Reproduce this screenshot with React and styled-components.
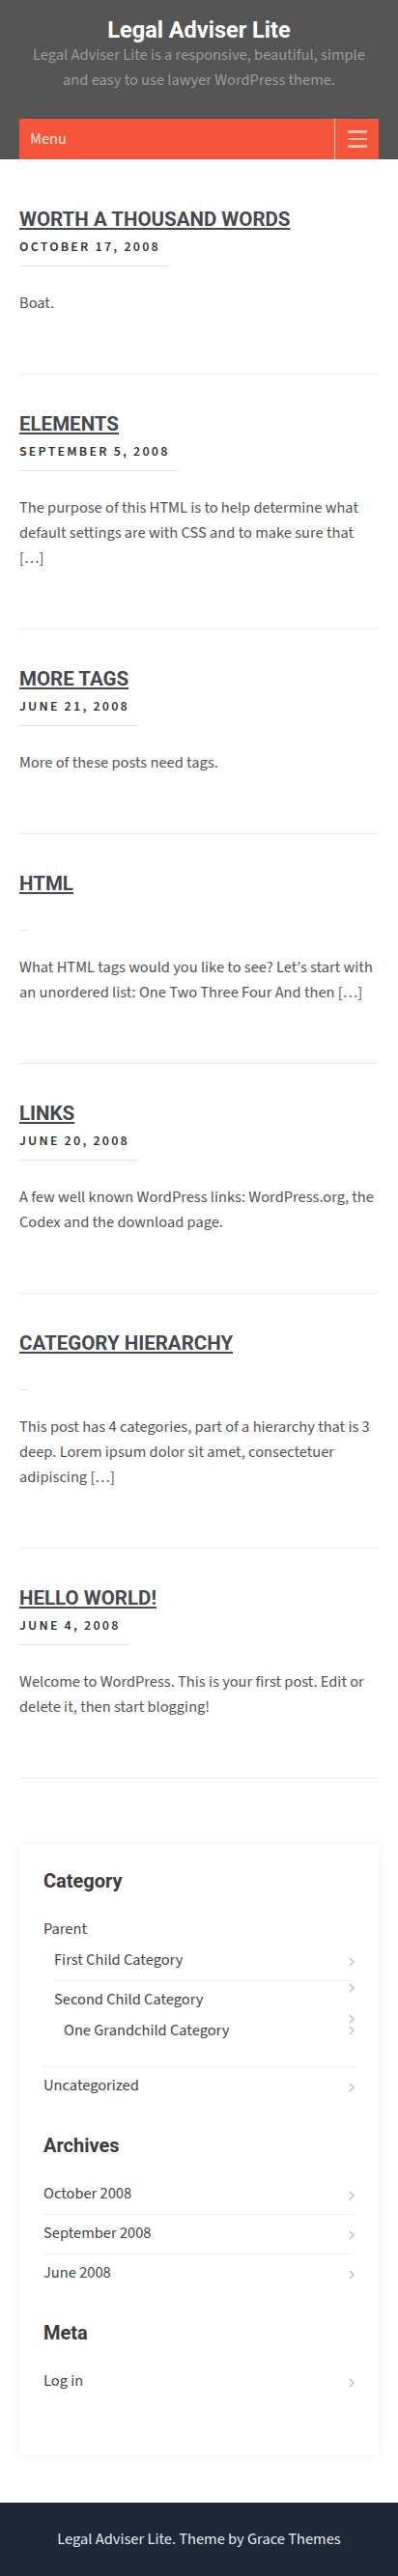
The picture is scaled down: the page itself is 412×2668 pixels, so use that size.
import React from "react";
import styled, { createGlobalStyle } from "styled-components";

const Global = createGlobalStyle`
  * { box-sizing: border-box; }
  html, body { margin: 0; padding: 0; background: #fff; }
  body { font-family: "Source Sans 3", "Lato", sans-serif; color: #555; }
  ul { list-style: none; margin: 0; padding: 0; }
`;

const Header = styled.header`
  background: #555555;
  padding: 18px 20px 0;
  text-align: center;
`;
const SiteTitle = styled.h1`
  margin: 0;
  font-family: "Roboto", sans-serif;
  font-weight: 700;
  font-size: 23.5px;
  line-height: 26px;
  color: #fff;
`;
const Tagline = styled.p`
  margin: 0 0 27px;
  font-size: 16.4px;
  font-weight: 400;
  line-height: 26px;
  color: #9c9c9c;
  padding: 0 6px;
`;
const MenuBar = styled.nav`
  display: flex;
  height: 42px;
  background: #f5553b;
  align-items: stretch;
`;
const MenuLabel = styled.span`
  flex: 1;
  display: flex;
  align-items: center;
  padding-left: 11px;
  font-size: 16.4px;
  color: #fde7dc;
`;
const Burger = styled.button`
  width: 46px;
  border: 0;
  border-left: 1px solid #f7cdb9;
  background: transparent;
  display: flex;
  flex-direction: column;
  align-items: center;
  justify-content: center;
  gap: 5px;
  padding: 0;
  span {
    display: block;
    width: 20px;
    height: 2.5px;
    border-radius: 1px;
    background: #f5c3ad;
  }
`;

const Main = styled.main`
  padding: 11px 20px 0;
`;
const Article = styled.article`
  padding: 36px 0 60px;
  border-bottom: 1px solid #e9e9e9;
`;
const PostTitle = styled.h2`
  margin: 0;
  font-family: "Roboto", sans-serif;
  font-weight: 700;
  font-size: 20.5px;
  line-height: 30px;
  text-transform: uppercase;
  a {
    color: #46494f;
    text-decoration: underline;
    text-decoration-thickness: 2px;
    text-underline-offset: 2px;
  }
`;
const DateWrap = styled.div`
  margin-top: 4px;
`;
const PostDate = styled.span`
  display: inline-block;
  height: 30px;
  padding: 0 9px 9px 0;
  border-bottom: 1px solid #e2e2e2;
  font-size: 14px;
  font-weight: 600;
  line-height: 20px;
  letter-spacing: 2.2px;
  text-transform: uppercase;
  color: #333;
  vertical-align: top;
`;
const Excerpt = styled.p`
  margin: 25px 0 0;
  font-size: 16.4px;
  line-height: 26px;
  color: #555;
`;

const Card = styled.aside`
  margin: 68px 20px 0;
  padding: 25px 25px 56px;
  border-radius: 4px;
  background: #fff;
  box-shadow: 0 0 12px rgba(0, 0, 0, 0.07);
`;
const Widget = styled.section`
  & + & { margin-top: 28px; }
`;
const WidgetTitle = styled.h3`
  margin: 0 0 18px;
  font-family: "Roboto", sans-serif;
  font-weight: 700;
  font-size: 20px;
  line-height: 26px;
  color: #3b3b3b;
`;
const SubList = styled.ul`
  padding-left: ${(p) => p.$indent || 0}px;
`;
const Item = styled.li`
  position: relative;
  padding: 6px 0 8px;
  font-size: 16.4px;
  line-height: 26px;
  color: #444;
  border-bottom: ${(p) => (p.$last ? "0" : "1px solid #ededed")};
`;
const Chevron = styled.svg`
  position: absolute;
  right: 0;
  width: 6px;
  height: 10px;
`;

const Arrow = ({ top }) => (
  <Chevron viewBox="0 0 6 10" style={{ top }}>
    <polyline points="1,1 5,5 1,9" fill="none" stroke="#b5b5b5" strokeWidth="1.1" />
  </Chevron>
);

const Footer = styled.footer`
  margin-top: 49px;
  background: #1d2737;
  padding: 25px 20px;
  text-align: center;
  font-size: 16.4px;
  line-height: 26px;
  color: #e6e8eb;
`;

const posts = [
  { t: "Worth A Thousand Words", d: "October 17, 2008", e: "Boat." },
  {
    t: "Elements",
    d: "September 5, 2008",
    e: "The purpose of this HTML is to help determine what default settings are with CSS and to make sure that […]",
  },
  { t: "More Tags", d: "June 21, 2008", e: "More of these posts need tags." },
  {
    t: "HTML",
    d: "",
    e: "What HTML tags would you like to see? Let’s start with an unordered list: One Two Three Four And then […]",
  },
  {
    t: "Links",
    d: "June 20, 2008",
    e: "A few well known WordPress links: WordPress.org, the Codex and the download page.",
  },
  {
    t: "Category Hierarchy",
    d: "",
    e: "This post has 4 categories, part of a hierarchy that is 3 deep. Lorem ipsum dolor sit amet, consectetuer adipiscing […]",
  },
  {
    t: "Hello world!",
    d: "June 4, 2008",
    e: "Welcome to WordPress. This is your first post. Edit or delete it, then start blogging!",
  },
];

export default function App() {
  return (
    <>
      <Global />
      <Header>
        <SiteTitle>Legal Adviser Lite</SiteTitle>
        <Tagline>Legal Adviser Lite is a responsive, beautiful, simple and easy to use lawyer WordPress theme.</Tagline>
        <MenuBar>
          <MenuLabel>Menu</MenuLabel>
          <Burger aria-label="menu">
            <span />
            <span />
            <span />
          </Burger>
        </MenuBar>
      </Header>
      <Main>
        {posts.map((p) => (
          <Article key={p.t}>
            <PostTitle>
              <a href="#">{p.t}</a>
            </PostTitle>
            <DateWrap>
              <PostDate>{p.d}</PostDate>
            </DateWrap>
            <Excerpt>{p.e}</Excerpt>
          </Article>
        ))}
      </Main>
      <Card>
        <Widget>
          <WidgetTitle>Category</WidgetTitle>
          <ul>
            <Item>
              Parent
              <SubList $indent={11}>
                <Item>
                  First Child Category
                  <Arrow top={16} />
                </Item>
                <Item $last>
                  Second Child Category
                  <Arrow top={2} />
                  <SubList $indent={10}>
                    <Item $last>
                      One Grandchild Category
                      <Arrow top={2} />
                      <Arrow top={14} />
                    </Item>
                  </SubList>
                </Item>
              </SubList>
            </Item>
            <Item $last>
              Uncategorized
              <Arrow top={16} />
            </Item>
          </ul>
        </Widget>
        <Widget>
          <WidgetTitle>Archives</WidgetTitle>
          <ul>
            <Item>
              October 2008
              <Arrow top={16} />
            </Item>
            <Item>
              September 2008
              <Arrow top={16} />
            </Item>
            <Item $last>
              June 2008
              <Arrow top={16} />
            </Item>
          </ul>
        </Widget>
        <Widget>
          <WidgetTitle>Meta</WidgetTitle>
          <ul>
            <Item $last>
              Log in
              <Arrow top={16} />
            </Item>
          </ul>
        </Widget>
      </Card>
      <Footer>Legal Adviser Lite. Theme by Grace Themes</Footer>
    </>
  );
}
